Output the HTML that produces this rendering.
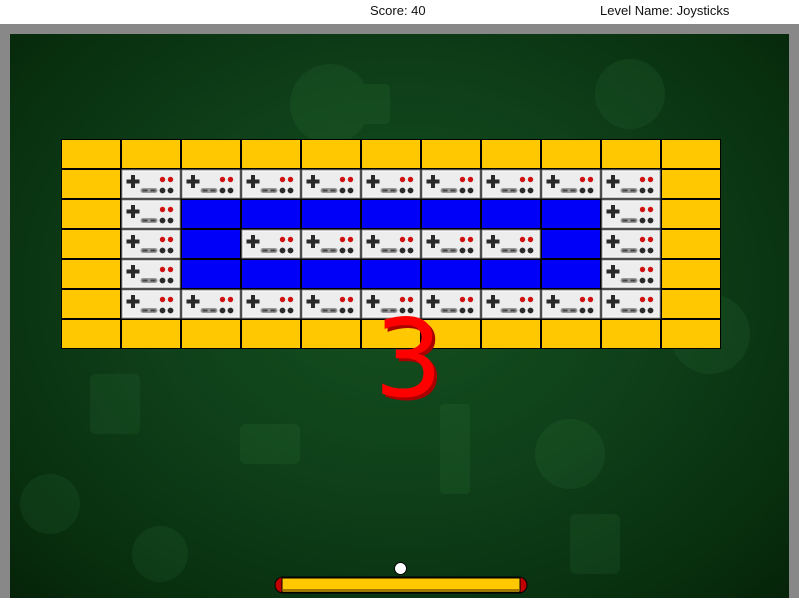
<!DOCTYPE html>
<html><head><meta charset="utf-8"><style>
body{margin:0;width:799px;height:603px;overflow:hidden;background:#fff;font-family:"Liberation Sans",sans-serif;position:relative}
.t{position:absolute;top:3px;font-size:13px;color:#111}
#frame{position:absolute;left:0;top:24px;width:799px;height:574px;background:#888}
#bg{position:absolute;left:10px;top:34px;width:779px;height:564px;background:radial-gradient(ellipse at 50% 45%,#14501f 0%,#0f4019 45%,#08300f 80%,#062309 100%)}
#grid{position:absolute;left:61px;top:139px}
.c{position:absolute;width:60px;height:30px;box-sizing:border-box;border:1px solid #000}
.y{background:#ffc800}.b{background:#0000f8}.k{background:#d8d8d8}
#three{position:absolute;left:374px;top:306px;font-size:108px;color:#f00;text-shadow:3px 3px 0 #a00;font-family:"DejaVu Sans",sans-serif;line-height:1}
</style></head><body>
<div class="t" style="left:370px">Score: 40</div>
<div class="t" style="left:600px">Level Name: Joysticks</div>
<div id="frame"></div>
<div id="bg">
<svg width="779" height="564" style="position:absolute;left:0;top:0;opacity:.1">
<g fill="#4aa05a">
<circle cx="40" cy="470" r="30"/><rect x="230" y="390" width="60" height="40" rx="6"/><circle cx="560" cy="420" r="35"/><rect x="430" y="370" width="30" height="90" rx="4"/><circle cx="700" cy="300" r="40"/><rect x="80" y="340" width="50" height="60" rx="6"/><circle cx="150" cy="520" r="28"/><rect x="560" y="480" width="50" height="60" rx="6"/><circle cx="320" cy="70" r="40"/><circle cx="620" cy="60" r="35"/><rect x="330" y="50" width="50" height="40" rx="5"/></g></svg>
</div>
<svg width="0" height="0" style="position:absolute"><defs>
<g id="ctl">
<rect x="0.5" y="0.5" width="58" height="28" fill="#ededed" stroke="#999"/>
<rect x="1.5" y="1.5" width="56" height="26" fill="none" stroke="#fff" stroke-width=".8"/>
<rect x="5" y="10" width="13" height="4" fill="#2a2a2a"/><rect x="9.5" y="5.5" width="4" height="13" fill="#2a2a2a"/>
<rect x="19" y="18.5" width="17" height="5" rx="2.5" fill="#999"/>
<rect x="21" y="20" width="5" height="2" fill="#444"/><rect x="29" y="20" width="5" height="2" fill="#444"/>
<circle cx="41" cy="10" r="2.7" fill="#d01010"/><circle cx="49" cy="10" r="2.7" fill="#d01010"/>
<circle cx="41" cy="21" r="2.9" fill="#2a2a2a"/><circle cx="49" cy="21" r="2.9" fill="#2a2a2a"/>
</g></defs></svg>
<div id="grid"></div>
<div id="three">3</div>
<svg style="position:absolute;left:274px;top:576px" width="254" height="18">
<rect x="1" y="1" width="252" height="16" rx="8" fill="#c00000" stroke="#000"/>
<rect x="8" y="2" width="238" height="14" fill="#ffc800" stroke="#000"/>
<rect x="9" y="13" width="236" height="3" fill="#a07800"/>
</svg>
<div style="position:absolute;left:394px;top:562px;width:13px;height:13px;border-radius:50%;background:#fff;border:1px solid #000;box-sizing:border-box"></div>
<script>
var rows=["YYYYYYYYYYY","YCCCCCCCCCY","YCBBBBBBBCY","YCBCCCCCBCY","YCBBBBBBBCY","YCCCCCCCCCY","YYYYYYYYYYY"];
var g=document.getElementById('grid'),h='';
rows.forEach(function(r,i){for(var j=0;j<11;j++){var t=r[j],x=j*60,y=i*30;
if(t=='C')h+='<div class="c k" style="left:'+x+'px;top:'+y+'px;border:none;background:#000"><svg width="60" height="30" style="position:absolute;left:0;top:0"><rect width="60" height="30" fill="#000"/><use href="#ctl" x="0.5" y="0.5"/></svg></div>';
else h+='<div class="c '+(t=='Y'?'y':'b')+'" style="left:'+x+'px;top:'+y+'px"></div>';}});
g.innerHTML=h;
</script>
</body></html>
